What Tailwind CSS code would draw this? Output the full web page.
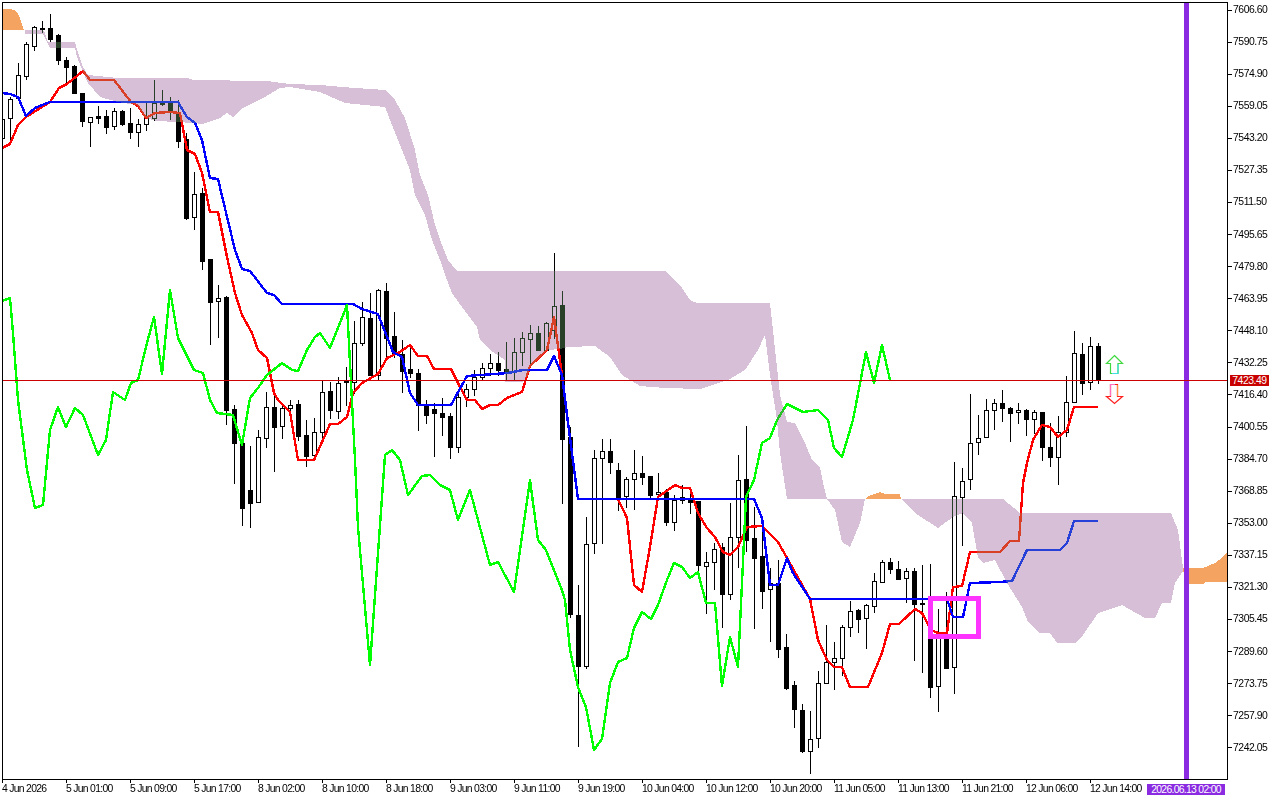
<!DOCTYPE html>
<html lang="en">
<head>
  <meta charset="UTF-8">
  <title>Chart</title>
  <script src="https://cdn.jsdelivr.net/npm/@tailwindcss/browser@4"></script>
</head>
<body class="bg-white overflow-hidden">
  <div class="relative w-[1280px] h-[800px] bg-white text-black font-['Liberation_Sans',sans-serif] text-[10.4px] leading-[12px] tracking-[-0.45px]">
    <!-- chart + price axis -->
    <div class="flex h-[780px] pt-[2px] pl-[2px]">
      <div class="w-[1226px] h-[778px] border border-black overflow-hidden">
        <svg id="chart" width="1224" height="776" viewBox="3 3 1224 776" class="block" shape-rendering="crispEdges"></svg>
      </div>
      <div class="w-[52px] h-[750px] mt-[2px] flex flex-col justify-between">
        <div class="flex items-center h-[12px] gap-px"><span class="w-1 h-px bg-black"></span><span>7606.60</span></div>
        <div class="flex items-center h-[12px] gap-px"><span class="w-1 h-px bg-black"></span><span>7590.75</span></div>
        <div class="flex items-center h-[12px] gap-px"><span class="w-1 h-px bg-black"></span><span>7574.90</span></div>
        <div class="flex items-center h-[12px] gap-px"><span class="w-1 h-px bg-black"></span><span>7559.05</span></div>
        <div class="flex items-center h-[12px] gap-px"><span class="w-1 h-px bg-black"></span><span>7543.20</span></div>
        <div class="flex items-center h-[12px] gap-px"><span class="w-1 h-px bg-black"></span><span>7527.35</span></div>
        <div class="flex items-center h-[12px] gap-px"><span class="w-1 h-px bg-black"></span><span>7511.50</span></div>
        <div class="flex items-center h-[12px] gap-px"><span class="w-1 h-px bg-black"></span><span>7495.65</span></div>
        <div class="flex items-center h-[12px] gap-px"><span class="w-1 h-px bg-black"></span><span>7479.80</span></div>
        <div class="flex items-center h-[12px] gap-px"><span class="w-1 h-px bg-black"></span><span>7463.95</span></div>
        <div class="flex items-center h-[12px] gap-px"><span class="w-1 h-px bg-black"></span><span>7448.10</span></div>
        <div class="flex items-center h-[12px] gap-px"><span class="w-1 h-px bg-black"></span><span>7432.25</span></div>
        <div class="flex items-center h-[12px] gap-px"><span class="w-1 h-px bg-black"></span><span>7416.40</span></div>
        <div class="flex items-center h-[12px] gap-px"><span class="w-1 h-px bg-black"></span><span>7400.55</span></div>
        <div class="flex items-center h-[12px] gap-px"><span class="w-1 h-px bg-black"></span><span>7384.70</span></div>
        <div class="flex items-center h-[12px] gap-px"><span class="w-1 h-px bg-black"></span><span>7368.85</span></div>
        <div class="flex items-center h-[12px] gap-px"><span class="w-1 h-px bg-black"></span><span>7353.00</span></div>
        <div class="flex items-center h-[12px] gap-px"><span class="w-1 h-px bg-black"></span><span>7337.15</span></div>
        <div class="flex items-center h-[12px] gap-px"><span class="w-1 h-px bg-black"></span><span>7321.30</span></div>
        <div class="flex items-center h-[12px] gap-px"><span class="w-1 h-px bg-black"></span><span>7305.45</span></div>
        <div class="flex items-center h-[12px] gap-px"><span class="w-1 h-px bg-black"></span><span>7289.60</span></div>
        <div class="flex items-center h-[12px] gap-px"><span class="w-1 h-px bg-black"></span><span>7273.75</span></div>
        <div class="flex items-center h-[12px] gap-px"><span class="w-1 h-px bg-black"></span><span>7257.90</span></div>
        <div class="flex items-center h-[12px] gap-px"><span class="w-1 h-px bg-black"></span><span>7242.05</span></div>
      </div>
    </div>

    <!-- time axis, one label every 64px -->
    <div class="flex pl-[2px] tracking-[-0.7px]">
      <div class="w-[64px] shrink-0"><div class="w-px h-[3px] bg-black"></div><div>4 Jun 2026</div></div>
      <div class="w-[64px] shrink-0"><div class="w-px h-[3px] bg-black"></div><div>5 Jun 01:00</div></div>
      <div class="w-[64px] shrink-0"><div class="w-px h-[3px] bg-black"></div><div>5 Jun 09:00</div></div>
      <div class="w-[64px] shrink-0"><div class="w-px h-[3px] bg-black"></div><div>5 Jun 17:00</div></div>
      <div class="w-[64px] shrink-0"><div class="w-px h-[3px] bg-black"></div><div>8 Jun 02:00</div></div>
      <div class="w-[64px] shrink-0"><div class="w-px h-[3px] bg-black"></div><div>8 Jun 10:00</div></div>
      <div class="w-[64px] shrink-0"><div class="w-px h-[3px] bg-black"></div><div>8 Jun 18:00</div></div>
      <div class="w-[64px] shrink-0"><div class="w-px h-[3px] bg-black"></div><div>9 Jun 03:00</div></div>
      <div class="w-[64px] shrink-0"><div class="w-px h-[3px] bg-black"></div><div>9 Jun 11:00</div></div>
      <div class="w-[64px] shrink-0"><div class="w-px h-[3px] bg-black"></div><div>9 Jun 19:00</div></div>
      <div class="w-[64px] shrink-0"><div class="w-px h-[3px] bg-black"></div><div>10 Jun 04:00</div></div>
      <div class="w-[64px] shrink-0"><div class="w-px h-[3px] bg-black"></div><div>10 Jun 12:00</div></div>
      <div class="w-[64px] shrink-0"><div class="w-px h-[3px] bg-black"></div><div>10 Jun 20:00</div></div>
      <div class="w-[64px] shrink-0"><div class="w-px h-[3px] bg-black"></div><div>11 Jun 05:00</div></div>
      <div class="w-[64px] shrink-0"><div class="w-px h-[3px] bg-black"></div><div>11 Jun 13:00</div></div>
      <div class="w-[64px] shrink-0"><div class="w-px h-[3px] bg-black"></div><div>11 Jun 21:00</div></div>
      <div class="w-[64px] shrink-0"><div class="w-px h-[3px] bg-black"></div><div>12 Jun 06:00</div></div>
      <div class="w-[64px] shrink-0"><div class="w-px h-[3px] bg-black"></div><div>12 Jun 14:00</div></div>
    </div>

    <!-- bid price tag and vline time tag sit over the axes -->
    <div class="absolute left-[1230px] top-[375px] w-[39px] h-[11px] bg-[#c80000] text-white text-center leading-[11px]">7423.49</div>
    <div class="absolute left-[1147px] top-[784px] w-[78px] h-[11px] bg-[#8a2be2] text-white text-center leading-[11px] tracking-[-0.7px]">2026.06.13 02:00</div>
  </div>

  <script>
    // top wick, body top, body bottom, low wick, 1 = white candle. x = 2 + 8*i
    const candles = [
      [118,119,138,148,1],[97,99,118,140,1],[63,75,98,99,1],[42,44,76,79,1],[26,27,46,50,1],[21,28,29,32,1],
      [14,28,39,41,0],[34,35,60,64,0],[57,60,67,82,0],[65,66,93,93,0],[93,93,121,126,0],[117,117,122,146,1],
      [106,116,118,123,0],[110,116,127,133,0],[108,111,126,129,1],[110,111,124,125,0],[108,123,132,138,0],[119,124,132,146,1],
      [103,118,124,130,1],[80,103,118,120,1],[90,103,104,105,0],[97,103,111,119,0],[100,113,141,147,0],[133,139,218,219,0],
      [172,194,217,229,1],[188,193,261,269,0],[259,259,302,344,0],[285,298,301,337,1],[296,297,410,424,0],[405,409,443,483,0],
      [443,443,508,525,0],[446,490,503,527,0],[430,437,502,502,1],[392,407,438,447,1],[390,407,427,471,0],[404,408,426,438,1],
      [400,405,408,416,1],[400,404,436,440,0],[420,435,456,466,0],[418,432,455,460,1],[380,392,432,437,1],[382,391,410,418,0],
      [377,383,411,418,1],[367,381,382,405,1],[321,343,382,393,1],[302,317,343,345,1],[293,318,375,375,0],[289,290,375,379,1],
      [283,291,338,357,0],[312,336,353,357,0],[340,354,371,392,0],[345,369,373,377,0],[369,373,405,430,0],[400,406,415,423,0],
      [403,409,413,456,0],[398,413,417,435,0],[413,416,447,458,0],[392,397,447,452,1],[384,389,397,406,1],[370,377,389,395,1],
      [363,368,377,380,1],[354,363,368,375,1],[352,363,370,375,0],[342,369,372,380,0],[338,352,372,380,1],[332,338,352,365,1],
      [325,333,339,365,1],[326,333,350,350,0],[322,323,350,350,1],[253,306,330,338,1],[291,305,439,503,0],[427,437,614,617,0],
      [585,615,666,746,0],[517,544,666,668,1],[450,458,543,553,1],[439,451,458,543,1],[439,451,462,473,0],[463,470,497,510,0],
      [477,479,496,507,1],[450,473,479,509,1],[456,473,477,484,0],[476,476,495,498,0],[473,492,494,499,1],[489,492,522,525,0],
      [495,500,522,530,1],[485,497,500,503,0],[492,498,502,513,0],[501,501,565,572,0],[552,562,566,613,1],[543,549,562,589,1],
      [543,547,594,627,0],[503,537,594,599,1],[455,480,537,567,1],[426,479,540,551,0],[507,538,558,628,0],[532,556,591,608,0],
      [568,583,589,641,1],[560,583,649,657,0],[634,647,688,689,0],[681,685,709,727,0],[704,710,751,752,0],[711,739,751,773,1],
      [671,683,738,747,1],[625,662,683,683,1],[642,658,662,689,1],[625,627,658,675,1],[601,611,627,636,1],[609,610,619,632,0],
      [604,605,618,648,1],[573,581,606,612,1],[560,562,582,582,1],[558,562,569,573,0],[561,569,579,579,0],[568,571,578,602,1],
      [568,571,604,660,0],[565,603,604,672,0],[564,600,687,697,0],[609,635,686,711,1],[592,635,668,668,0],[462,496,667,693,1],
      [468,481,497,545,1],[394,443,479,489,1],[415,438,442,454,1],[399,410,437,437,1],[399,403,410,429,1],[390,403,408,421,0],
      [407,408,413,441,0],[403,410,412,423,1],[409,410,419,435,0],[410,412,419,433,1],[412,412,447,460,0],[423,447,457,466,0],
      [416,432,457,484,1],[376,402,432,436,1],[331,353,402,402,1],[343,354,383,394,0],[337,346,382,389,1],[343,346,380,383,0]
    ];

    const red = '2,148 10,144 18,125 26,117 50,102 59,88 67,84 83,71 90,80 114,80 131,102 138,106 146,118 155,113 170,112 180,113 187,150 195,154 202,173 210,212 218,212 227,257 235,293 242,315 252,333 258,350 267,358 274,393 278,400 290,412 298,460 314,460 330,424 338,424 347,417 353,393 362,383 378,374 387,358 400,352 410,345 418,356 427,356 434,369 451,369 458,383 467,400 475,400 482,409 490,405 498,405 507,398 522,392 530,366 547,350 554,317 562,375 568,423 578,499 618,499 627,518 634,585 642,592 650,547 658,497 675,485 682,488 690,488 698,513 707,528 715,537 723,552 730,555 738,547 747,527 762,526 778,542 787,558 810,599 818,640 827,660 834,667 842,667 850,687 868,687 882,653 890,624 899,624 915,609 922,613 931,630 938,633 947,633 953,587 962,586 970,552 1000,552 1010,541 1019,541 1023,483 1027,463 1033,440 1042,425 1050,427 1058,437 1067,430 1074,407 1098,407';
    const blue = '2,93 10,94 18,97 26,116 35,108 50,102 178,102 187,117 195,123 202,140 210,178 218,179 223,200 235,250 242,269 250,271 267,293 274,295 282,304 353,304 362,309 378,314 393,352 402,357 410,393 418,405 451,405 467,376 508,373 523,370 547,370 554,356 562,375 568,423 578,499 754,499 762,518 770,585 778,585 787,558 793,573 810,599 947,599 953,617 963,617 970,583 1000,582 1012,581 1027,550 1060,550 1067,543 1074,521 1098,521';
    const green = '2,301 10,298 13,333 18,400 27,470 35,508 43,505 50,430 58,407 66,427 75,408 83,415 98,455 106,440 113,392 125,400 131,383 138,380 147,343 154,317 162,374 170,290 178,338 194,370 203,373 210,400 217,413 233,415 242,445 250,398 258,388 267,375 282,363 292,370 298,371 307,350 315,337 320,333 330,348 347,305 355,460 358,527 370,665 385,455 392,450 400,460 408,495 422,476 430,475 440,485 450,490 458,520 470,490 490,565 498,562 514,592 530,480 538,540 546,550 562,590 565,600 570,650 578,687 586,707 594,750 602,739 610,683 618,662 627,658 634,628 642,612 651,619 658,605 667,580 674,563 682,567 690,578 698,572 706,603 715,603 722,686 730,637 738,667 742,583 746,497 754,480 762,443 770,438 777,420 787,404 803,412 818,410 828,420 834,448 842,457 853,420 866,352 874,383 882,345 890,380';

    const kumo = [
      '25,30 43,30 45,33 48,42 75,42 77,50 83,67 88,75 118,78 188,78 193,80 267,81 290,84 320,85 355,88 385,90 395,100 405,118 415,150 420,175 428,195 435,225 442,245 448,260 457,271 665,271 680,285 690,300 697,303 770,303 774,340 780,395 787,422 795,423 805,443 812,460 820,467 823,483 827,499 787,499 780,453 777,420 770,375 765,335 758,350 745,370 728,380 700,389 665,388 640,386 622,375 610,357 595,346 568,347 560,349 547,350 530,367 528,375 523,382 505,382 505,360 490,350 480,340 477,327 462,307 452,293 447,280 440,260 432,240 425,215 415,195 410,170 402,150 392,125 385,107 345,103 320,92 290,87 280,88 263,98 243,108 233,117 227,113 220,118 202,124 193,123 177,122 157,121 145,118 137,105 118,102 100,97 88,83 83,72 77,57 75,48 50,48 43,34 25,34',
      '827,499 865,499 860,523 850,547 842,542 835,510',
      '901,499 1003,499 1020,513 1171,513 1178,530 1183,568 1183,571 1175,583 1171,603 1162,603 1155,618 1145,618 1122,605 1098,613 1083,635 1075,643 1057,643 1050,633 1040,633 1028,622 1022,607 1007,583 995,560 983,563 978,558 972,523 963,513 953,517 938,528 915,513'
    ];
    const kumoOrange = [
      '3,9 10,9 14,10 18,14 20,18 22,24 24,30 3,30',
      '865,499 868,496 880,492 885,494 900,494 901,499',
      '1183,571 1183,568 1203,568 1208,566 1215,563 1222,558 1227,552 1227,582 1205,582 1203,584 1188,584'
    ];

    let s = '<rect x="3" y="3" width="1224" height="776" fill="#fff"/>';
    candles.forEach((c, i) => {
      const x = 2 + 8 * i;
      s += `<rect x="${x}" y="${c[0]}" width="1" height="${c[3] - c[0] + 1}" fill="#000"/>`;
    });
    candles.forEach((c, i) => {
      const x = 2 + 8 * i;
      s += `<rect x="${x - 1.5}" y="${c[1] + .5}" width="4" height="${c[2] - c[1]}" fill="${c[4] ? '#fff' : '#000'}" stroke="#000"/>`;
    });
    [[red, '#ff0000'], [blue, '#0000ff'], [green, '#00ff00']].forEach(l => {
      s += `<polyline points="${l[0]}" fill="none" stroke="${l[1]}" stroke-width="2.4" stroke-linejoin="round"/>`;
    });
    // the cloud xors with what is under it
    s += '<g class="mix-blend-difference">';
    kumo.forEach(p => s += `<polygon points="${p}" fill="#274027"/>`);
    kumoOrange.forEach(p => s += `<polygon points="${p}" fill="#0b5b9f"/>`);
    s += '</g>';
    s += '<rect x="930.5" y="598.5" width="48" height="38" fill="none" stroke="#ff33ff" stroke-width="5"/>';
    s += '<rect x="1184" y="3" width="5" height="776" fill="#8a2be2"/>';
    s += '<rect x="3" y="380" width="1224" height="1" fill="#cc0000"/>';
    // arrows
    s += '<g shape-rendering="auto" fill="#fff" stroke-width="1.2" stroke-linejoin="miter">';
    s += '<polygon points="1114.5,355.5 1122.5,363.5 1118,363.5 1118,373.5 1110.5,373.5 1110.5,363.5 1106.5,363.5" stroke="#3fd83f"/>';
    s += '<path d="M1118 364V373.5H1112" fill="none" stroke="#40e0e0"/>';
    s += '<polygon points="1110.5,384.5 1117.5,384.5 1117.5,396.5 1122.5,396.5 1114.5,403.5 1106.5,396.5 1110.5,396.5" stroke="#ff2020"/>';
    s += '<path d="M1110.5 396V384.5H1115" fill="none" stroke="#ff70c0"/>';
    s += '<path d="M1117.5 385V396" fill="none" stroke="#ff9040"/>';
    s += '</g>';
    document.getElementById('chart').innerHTML = s;
  </script>
</body>
</html>
